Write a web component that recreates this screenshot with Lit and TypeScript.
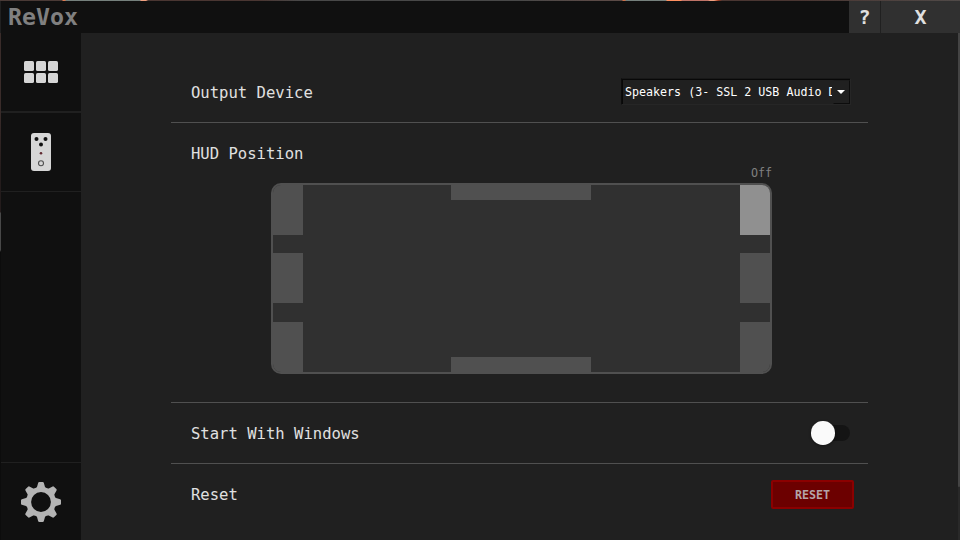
import { LitElement, html, svg, css } from "lit";
import { customElement } from "lit/decorators.js";

const CELLS = ["tl", "tc", "tr on", "ml", "mr", "bl", "bc", "br"];
const TEETH = [0, 45, 90, 135, 180, 225, 270, 315];

@customElement("app-root")
export class AppRoot extends LitElement {
  static styles = css`
    :host {
      display: flex; flex-direction: column; box-sizing: border-box;
      width: 960px; height: 540px; overflow: hidden; position: relative;
      background: #202020; color: #e0e0e0;
      font-family: "DejaVu Sans Mono", monospace;
    }
    .desk {
      flex: none; height: 1px;
      background: linear-gradient(90deg, #4a3a36 0 62px, #e07a50 63px 65px, #75807c 66px 140px, #f0a080 141px 146px, #4a3632 148px 260px, #484848 300px 520px, #5a4a46 590px 622px, #d07048 623px 625px, #75807c 626px 666px, #ff9060 667px 681px, #c07468 682px 708px, #f0a080 710px 714px, #a84024 718px, #4a3632 722px 800px, #504a48 960px);
    }
    .titlebar { flex: none; display: flex; height: 32px; background: #101010; margin-left: 1px; }
    .brand { flex: 1; padding-left: 7px; font-size: 23.25px; line-height: 32px; height: 32px; font-weight: bold; color: #808080; }
    .tbtn { width: 31px; background: #303030; text-align: center; font-size: 20px; line-height: 32px; font-weight: bold; color: #e0e0e0; }
    .close { width: 79px; border-left: 1px solid #202020; }
    .main { flex: 1; display: flex; min-height: 0; }
    .edge { width: 1px; background: linear-gradient(#3a2c2a 0 80px, #241c1c 140px 179px, #484848 180px 217px, #0c0c0c 219px); }
    .side { width: 80px; background: #101010; display: flex; flex-direction: column; }
    .nav { height: 78px; display: flex; align-items: center; justify-content: center; border-bottom: 1px solid #202020; }
    .first { border-bottom-width: 2px; }
    .last { margin-top: auto; height: 77px; border-bottom: 0; border-top: 1px solid #202020; }
    svg { display: block; }
    .content { flex: 1; padding: 29px 90px 0; }
    .row {
      display: flex; align-items: center; justify-content: space-between;
      height: 60px; padding: 0 18px 0 20px; border-bottom: 1px solid #505050; font-size: 15.57px;
    }
    .label { padding-top: 2px; }
    .plain { border: 0; padding-right: 14px; }
    .combo {
      box-sizing: border-box; width: 230px; height: 27px; margin: -2px -1px 0 0; display: flex;
      border: 1px solid #262626; border-left-color: #0c0c0c; border-top-color: #181818;
      box-shadow: inset 1px 1px #080808; font-size: 11.67px; line-height: 27px; color: #fff;
    }
    .value { flex: 1; padding-left: 3px; overflow: hidden; white-space: nowrap; }
    .clip { overflow: hidden; width: 207px; }
    .drop {
      box-sizing: border-box; width: 17px; height: 24px; margin-top: 1px; padding-right: 1px;
      display: flex; align-items: center; justify-content: center;
      border: 1px solid #0c0c0c; border-left-color: #202020; border-top-color: #1c1c1c;
    }
    .hud { height: 279px; border-bottom: 1px solid #505050; }
    .hudlabel { padding-left: 20px; font-size: 15.57px; line-height: 20px; padding-top: 21px; }
    .off { padding-right: 96px; text-align: right; font-size: 11.7px; line-height: 15px; margin-top: 2px; color: #808080; }
    .screen {
      box-sizing: border-box; margin: 2px 0 0 100px; width: 501px; height: 191px;
      border: 2px solid #505050; border-radius: 10px; background: #303030; overflow: hidden;
      display: grid; grid-template-columns: 30px 148px 140px 149px 30px;
      grid-template-rows: 50px 18px 50px 19px 50px;
      grid-template-areas: "tl . tc . tr" ". . . . ." "ml . . . mr" ". . . . ." "bl . bc . br";
    }
    .cell { background: #505050; }
    .on { background: #909090; }
    .tl { grid-area: tl; } .tc { grid-area: tc; height: 15px; } .tr { grid-area: tr; }
    .ml { grid-area: ml; } .mr { grid-area: mr; }
    .bl { grid-area: bl; } .bc { grid-area: bc; height: 15px; align-self: end; } .br { grid-area: br; }
    .toggle { width: 35px; height: 16px; border-radius: 8px; background: #141414; display: flex; align-items: center; }
    .knob { flex: none; width: 23.5px; height: 23.5px; margin-left: -4px; border-radius: 50%; background: #fafafa; box-shadow: 0 1px 3px rgba(0,0,0,.4); }
    .reset {
      box-sizing: border-box; width: 83px; height: 29px; border: 2px solid #8b0000; border-radius: 2px;
      background: #6c0000; color: #b4a4a8; font-size: 11.7px; font-weight: bold; line-height: 27px; text-align: center;
    }
    .scroll { width: 2px; background: #292929; }
    .thumb { height: 454px; background: #444; border-radius: 0 0 1px 1px; }
  `;

  render() {
    return html`
      <div class="desk"></div>
      <div class="titlebar">
        <div class="brand">ReVox</div>
        <div class="tbtn">?</div>
        <div class="tbtn close">X</div>
      </div>
      <div class="main">
        <div class="edge"></div>
        <div class="side">
          <div class="nav first">
            <svg width="34" height="22" fill="#d6d6d6">
              ${[0, 1, 2, 3, 4, 5].map((i) => svg`<rect x=${(i % 3) * 12} y=${Math.floor(i / 3) * 12} width="10" height="10" rx="1.6"></rect>`)}
            </svg>
          </div>
          <div class="nav">
            <svg width="20" height="38" viewBox="0 0 20 38">
              <rect width="20" height="38" rx="3" fill="#d6d6d6"></rect>
              <circle cx="5.5" cy="6" r="2" fill="#101010"></circle>
              <circle cx="14.5" cy="6" r="2" fill="#101010"></circle>
              <circle cx="10" cy="11.5" r="2" fill="#101010"></circle>
              <circle cx="10" cy="20.3" r="1.3" fill="#602830"></circle>
              <circle cx="10" cy="30.2" r="2.5" fill="none" stroke="#505050" stroke-width="1.1"></circle>
            </svg>
          </div>
          <div class="nav last">
            <svg width="40" height="40" viewBox="-20 -20 40 40">
              <circle r="12.4" fill="none" stroke="#b4b4b4" stroke-width="5"></circle>
              ${TEETH.map((a) => svg`<path transform="rotate(${a})" fill="#b4b4b4" d="M-5.6 -13L-4 -15L-2.8 -19.2Q-2.5 -20 -1.7 -20H1.7Q2.5 -20 2.8 -19.2L4 -15L5.6 -13Z"></path>`)}
            </svg>
          </div>
        </div>
        <div class="content">
          <div class="row">
            <span class="label">Output Device</span>
            <div class="combo">
              <div class="value"><div class="clip">Speakers (3- SSL 2 USB Audio Device)</div></div>
              <div class="drop"><svg width="8" height="4"><path d="M0 0H8L4 4Z" fill="#fff"></path></svg></div>
            </div>
          </div>
          <div class="hud">
            <div class="hudlabel">HUD Position</div>
            <div class="off">Off</div>
            <div class="screen">${CELLS.map((c) => html`<div class="cell ${c}"></div>`)}</div>
          </div>
          <div class="row">
            <span class="label">Start With Windows</span>
            <div class="toggle"><div class="knob"></div></div>
          </div>
          <div class="row plain">
            <span class="label">Reset</span>
            <div class="reset">RESET</div>
          </div>
        </div>
        <div class="scroll"><div class="thumb"></div></div>
      </div>
    `;
  }
}
